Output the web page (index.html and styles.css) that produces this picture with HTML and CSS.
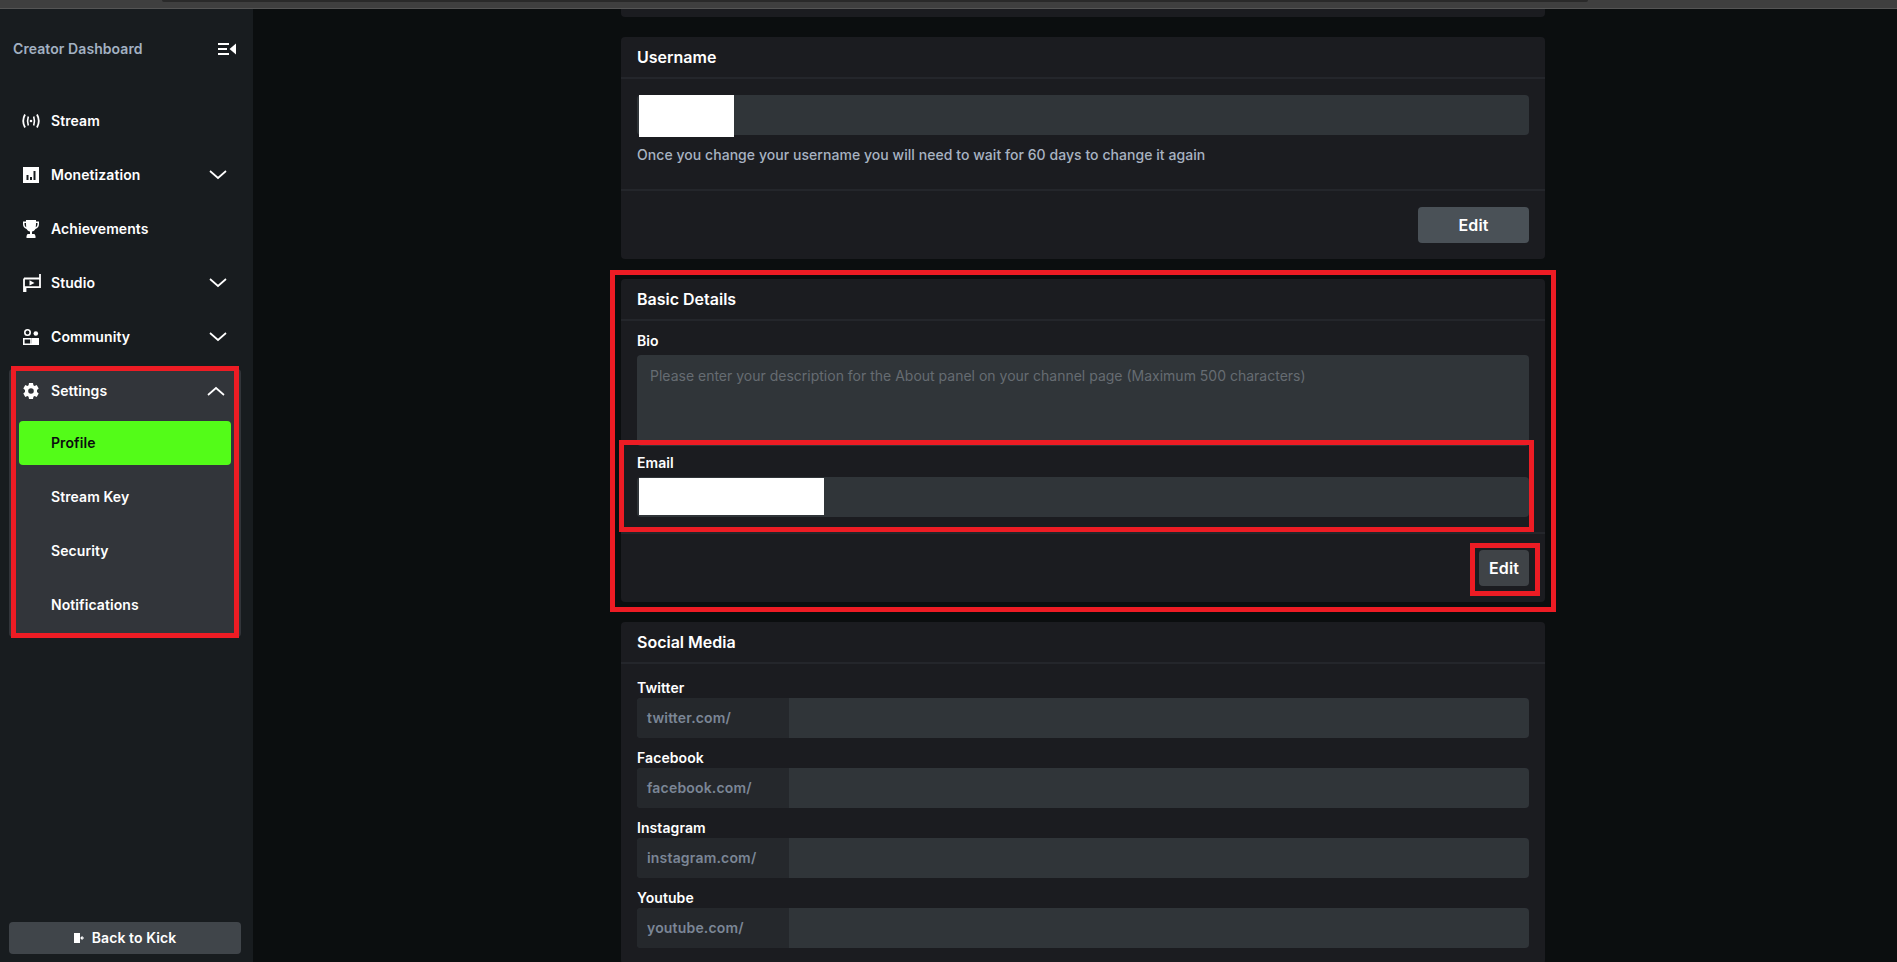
FILE: index.html
```html
<!DOCTYPE html>
<html lang="en">
<head>
<meta charset="utf-8">
<title>Creator Dashboard</title>
<link rel="stylesheet" href="styles.css">
</head>
<body>
<div class="topbar"><div class="topbar-inner"></div></div>
<div class="app">
  <aside class="sidebar">
    <div class="side-head">
      <span class="side-title">Creator Dashboard</span>
      <svg class="collapse" viewBox="0 0 18 12" width="18" height="12"><path d="M0 0h11v2H0zM0 5h9v2H0zM0 10h11v2H0z" fill="#fff"/><path d="M18 0.500v11L11.500 6z" fill="#fff"/></svg>
    </div>
    <nav class="nav">
      <a class="item"><svg class="ico ico-wide" viewBox="0 0 18 16"><path d="M3 1.500C.8 5.500.8 10.500 3 14.500M15 1.500c2.200 4 2.200 9 0 13" fill="none" stroke="#fff" stroke-width="1.800"/><path d="M6.300 3.500c-1 3-1 6 0 9M11.700 3.500c1 3 1 6 0 9" fill="none" stroke="#fff" stroke-width="1.600"/><circle cx="9" cy="8" r="1.300" fill="#fff"/></svg><span>Stream</span></a>
      <a class="item"><svg class="ico" viewBox="0 0 16 16"><path fill-rule="evenodd" d="M0 0h16v16H0zM3.500 8v5h2V8zM7 10v3h2v-3zM10.500 4v9h2V4z" fill="#fff"/></svg><span>Monetization</span><svg class="chev" viewBox="0 0 18 10"><path d="M1 1l8 7 8-7" fill="none" stroke="#fff" stroke-width="1.700"/></svg></a>
      <a class="item"><svg class="ico ico-tall" viewBox="0 0 16 18"><path d="M3 0h10v1.500h3V4c0 2.800-1.500 4.500-3.600 4.900C11.600 10.400 10.500 11.200 9 11.500V14h2.500l1 2v2h-9v-2l1-2H7v-2.500C5.500 11.200 4.400 10.400 3.600 8.900 1.500 8.500 0 6.800 0 4V1.500h3zM1.500 3v1c0 1.600.7 2.800 1.800 3.300C3.100 6.500 3 5 3 3zM14.500 3H13c0 2-.1 3.500-.3 4.300 1.100-.5 1.800-1.700 1.800-3.300z" fill="#fff" fill-rule="evenodd"/></svg><span>Achievements</span></a>
      <a class="item"><svg class="ico ico-wide ico-studio" viewBox="0 0 18 18"><path d="M17 0v13.200H2.500V18M1 4.500H17M1 4.500V18" fill="none" stroke="#fff" stroke-width="1.800"/><path d="M6.500 6.300v5.200l5-2.600z" fill="#fff"/></svg><span>Studio</span><svg class="chev" viewBox="0 0 18 10"><path d="M1 1l8 7 8-7" fill="none" stroke="#fff" stroke-width="1.700"/></svg></a>
      <a class="item"><svg class="ico" viewBox="0 0 16 16"><circle cx="4.500" cy="3.500" r="2.700" fill="none" stroke="#fff" stroke-width="1.600"/><circle cx="12.800" cy="4.500" r="2.300" fill="#fff"/><path d="M.8 16V9.800h7.200V16" fill="none" stroke="#fff" stroke-width="1.600"/><path d="M9 9h7v7H9z" fill="#fff"/><path d="M0 16h16v-1.500H0z" fill="#fff"/></svg><span>Community</span><svg class="chev" viewBox="0 0 18 10"><path d="M1 1l8 7 8-7" fill="none" stroke="#fff" stroke-width="1.700"/></svg></a>
      <div class="group">
        <a class="item"><svg class="ico" viewBox="0 0 16 16"><path fill-rule="evenodd" d="M6 0h4l.4 2.200 1.200.7L13.700 2l2 3.500L14 7v2l1.700 1.500-2 3.500-2.100-.9-1.200.7L10 16H6l-.4-2.200-1.200-.7-2.100.9-2-3.500L2 9V7L.3 5.500l2-3.500 2.100.9 1.200-.7zM8 5.200a2.800 2.800 0 1 0 0 5.600 2.800 2.800 0 0 0 0-5.600z" fill="#fff"/></svg><span>Settings</span><svg class="chev up" viewBox="0 0 18 10"><path d="M1 9l8-7 8 7" fill="none" stroke="#fff" stroke-width="1.700"/></svg></a>
        <div class="sub">
          <a class="subitem active">Profile</a>
          <a class="subitem">Stream Key</a>
          <a class="subitem">Security</a>
          <a class="subitem">Notifications</a>
        </div>
      </div>
    </nav>
    <button class="back"><svg viewBox="0 0 11 10" width="11" height="10"><path d="M0 0h6v10H0z" fill="#fff"/><path d="M7 5h3M8.500 3.500L7 5l1.500 1.500" fill="none" stroke="#fff" stroke-width="1.200"/></svg><span>Back to Kick</span></button>
  </aside>
  <main class="main">
    <div class="column">
      <section class="card stub"></section>

      <section class="card">
        <h2 class="card-head">Username</h2>
        <div class="card-body user-body">
          <div class="field-box"><div class="redact redact-user"></div></div>
          <p class="help">Once you change your username you will need to wait for 60 days to change it again</p>
        </div>
        <div class="card-foot"><button class="btn btn-wide">Edit</button></div>
      </section>

      <section class="card">
        <h2 class="card-head">Basic Details</h2>
        <div class="card-body basic-body">
          <label class="label">Bio</label>
          <div class="textarea">Please enter your description for the About panel on your channel page (Maximum 500 characters)</div>
          <label class="label email-label">Email</label>
          <div class="field-box"><div class="redact redact-email"></div></div>
        </div>
        <div class="card-foot"><button class="btn btn-small">Edit</button></div>
      </section>

      <section class="card">
        <h2 class="card-head">Social Media</h2>
        <div class="card-body social-body">
          <div class="social"><label class="label">Twitter</label><div class="field-box"><span class="prefix">twitter.com/</span></div></div>
          <div class="social"><label class="label">Facebook</label><div class="field-box"><span class="prefix">facebook.com/</span></div></div>
          <div class="social"><label class="label">Instagram</label><div class="field-box"><span class="prefix">instagram.com/</span></div></div>
          <div class="social"><label class="label">Youtube</label><div class="field-box"><span class="prefix">youtube.com/</span></div></div>
        </div>
      </section>
    </div>
  </main>
</div>
<div class="mark mark-settings"></div>
<div class="mark mark-basic"></div>
<div class="mark mark-email"></div>
<div class="mark mark-edit"></div>
</body>
</html>
```
FILE: styles.css
```css
* { box-sizing: border-box; }
html, body { margin: 0; height: 100%; overflow: hidden; }
body {
  position: relative;
  display: flex;
  flex-direction: column;
  background: #0b0e0f;
  color: #fff;
  font-family: Inter, "Liberation Sans", sans-serif;
  font-size: 14px;
  font-weight: 600;
  letter-spacing: 0.08px;
}
.topbar {
  height: 9px;
  flex: none;
  background: #3f3f3f;
  border-bottom: 1px solid #555;
}
.topbar-inner {
  height: 2px;
  margin: 0 309px 0 162px;
  background: #2a2a2a;
  border-radius: 0 0 3px 3px;
}
.app { flex: 1; display: flex; min-height: 0; }

.sidebar {
  width: 253px;
  flex: none;
  display: flex;
  flex-direction: column;
  background: #181c1f;
  padding: 0 12px 8px 9px;
}
.side-head {
  height: 80px;
  flex: none;
  display: flex;
  align-items: center;
  justify-content: space-between;
  padding: 0 5px 1px 4px;
  margin-bottom: 10px;
}
.side-title { color: #a3b1c2; font-size: 14px; font-weight: 600; }
.nav { display: flex; flex-direction: column; gap: 10px; }
.item {
  height: 44px;
  display: flex;
  align-items: center;
  padding: 0 14px 1px;
}
.ico { width: 16px; height: 16px; flex: none; margin-right: 12px; }
.ico-wide { width: 18px; margin-left: -1px; margin-right: 11px; }
.ico-tall { height: 18px; }
.ico-studio { height: 18px; margin-left: 0; margin-right: 10px; }
.item span { flex: 1; }
.chev { width: 18px; height: 10px; flex: none; }
.chev.up { margin-right: 2px; }
.group {
  background: #32353a;
  border-radius: 4px;
  padding-bottom: 10px;
}
.sub { display: flex; flex-direction: column; gap: 10px; padding: 8px 10px 0; }
.subitem {
  height: 44px;
  display: flex;
  align-items: center;
  padding: 0 0 1px 32px;
  border-radius: 4px;
}
.subitem.active { background: #53fc18; color: #0b0e0f; }
.back {
  margin-top: auto;
  height: 32px;
  display: flex;
  align-items: center;
  justify-content: center;
  gap: 7px;
  padding: 0 0 1px;
  border: 0;
  border-radius: 4px;
  background: #40454a;
  color: #fff;
  font: inherit;
  letter-spacing: inherit;
}

.main { flex: 1; min-width: 0; overflow: hidden; padding-left: 368px; }
.column { width: 924px; display: flex; flex-direction: column; gap: 20px; }
.card { background: #1b1c20; border-radius: 4px; }
.stub { height: 8px; border-radius: 0 0 4px 4px; }
.card-head {
  margin: 0;
  height: 42px;
  padding: 0 16px;
  display: flex;
  align-items: center;
  font-size: 16px;
  font-weight: 600;
  letter-spacing: 0;
  border-bottom: 2px solid #24262b;
}
.card-body { padding: 16px; border-bottom: 2px solid #24262b; }
.user-body { height: 112px; }
.basic-body { height: 213px; padding-top: 10px; }
.social-body { border-bottom: 0; padding-top: 18px; display: flex; flex-direction: column; gap: 14px; }
.card-foot { display: flex; justify-content: flex-end; padding: 16px; }
.field-box {
  height: 40px;
  display: flex;
  background: #303539;
  border-radius: 4px;
}
.redact { background: #fff; margin-left: 2px; }
.redact-user { width: 95px; height: 42px; }
.redact-email { width: 185px; height: 37px; margin-top: 1px; }
.help { margin: 10px 0 0; color: #a8b3c2; font-weight: 500; font-size: 14px; line-height: 20px; letter-spacing: 0.05px; }
.label { display: block; line-height: 20px; height: 20px; font-size: 14px; }
.email-label { margin: 7px 0 4px; }
.textarea {
  height: 91px;
  margin-top: 4px;
  padding: 11px 13px;
  background: #303539;
  border-radius: 4px;
  color: #666c72;
  font-weight: 400;
  line-height: 20px;
  letter-spacing: 0;
}
.btn {
  height: 36px;
  border: 0;
  border-radius: 4px;
  color: #fff;
  font: inherit;
  font-size: 16px;
  letter-spacing: inherit;
}
.btn-wide { width: 111px; background: #4a5157; }
.btn-small { width: 50px; background: #3f4347; }
.prefix {
  width: 152px;
  flex: none;
  display: flex;
  align-items: center;
  padding: 0 0 2px 10px;
  background: #25282c;
  border-radius: 4px 0 0 4px;
  color: #7b8696;
  letter-spacing: 0.18px;
}
.social .label { height: 14px; line-height: 12px; margin-bottom: 2px; }

.mark { position: absolute; border: 5px solid #ed1c24; }
.mark-settings { left: 11px; top: 366px; width: 228px; height: 272px; }
.mark-basic { left: 610px; top: 270px; width: 946px; height: 342px; }
.mark-email { left: 619px; top: 440px; width: 915px; height: 92px; }
.mark-edit { left: 1470px; top: 543px; width: 70px; height: 53px; }
```
